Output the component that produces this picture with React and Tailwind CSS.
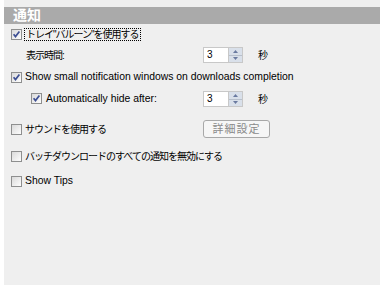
import React from 'react';

const font = { fontFamily: '"Liberation Sans", "Noto Sans CJK JP", sans-serif' };

const Check = ({ checked }) => (
  <svg width="11" height="11" viewBox="0 0 11 11" className="shrink-0">
    <defs>
      <linearGradient id="cbg" x1="0" y1="0" x2="1" y2="1">
        <stop offset="0" stopColor="#d8d8d8" />
        <stop offset="1" stopColor="#ffffff" />
      </linearGradient>
    </defs>
    <rect x="0.5" y="0.5" width="10" height="10" fill="url(#cbg)" stroke="#8e8f8f" />
    {checked && <path d="M2.6 5.2 L4.5 7.6 L8.4 2.6" fill="none" stroke="#3d4f93" strokeWidth="1.7" />}
  </svg>
);

const Spinner = ({ value }) => (
  <div className="flex h-[16px] w-[40px] border border-[#c8c8c8] bg-white">
    <div className="flex-1 pl-[3px] text-[10px] leading-[14px] text-black">{value}</div>
    <div className="flex w-[14px] flex-col border-l border-[#c8c8c8]">
      <div className="flex flex-1 items-center justify-center bg-[#d9e0ea] border-b border-[#b8c0cc]">
        <svg width="5" height="3" viewBox="0 0 5 3"><path d="M0 3 L2.5 0 L5 3Z" fill="#6a7aa0" /></svg>
      </div>
      <div className="flex flex-1 items-center justify-center bg-[#d9e0ea]">
        <svg width="5" height="3" viewBox="0 0 5 3"><path d="M0 0 L2.5 3 L5 0Z" fill="#6a7aa0" /></svg>
      </div>
    </div>
  </div>
);

const ja = 'text-[10px] tracking-[-1px] text-black';
const en = 'text-[10.4px] text-black';

export default function App() {
  return (
    <div className="flex h-[285px] w-[380px] bg-white" style={font}>
      <div className="ml-[4px] flex flex-1 flex-col bg-[#efefef] pt-[7px]">
        <div className="flex h-[17px] items-center bg-[#aaaaaa] pl-[9px] text-[14px] font-bold text-white">
          通知
        </div>

        <div className="mt-[4px] flex h-[13px] items-center pl-[7px]">
          <Check checked />
          <span className={`ml-[2px] border border-dotted border-black px-[1px] leading-[11px] ${ja}`}>
            トレイ"バルーン"を使用する
          </span>
        </div>

        <div className="mt-[6px] flex h-[16px] items-center">
          <span className={`ml-[22px] w-[177px] ${ja}`}>表示時間:</span>
          <Spinner value="3" />
          <span className={`ml-[15px] ${ja}`}>秒</span>
        </div>

        <div className="mt-[7px] flex h-[14px] items-center pl-[7px]">
          <Check checked />
          <span className={`ml-[3px] ${en}`}>Show small notification windows on downloads completion</span>
        </div>

        <div className="mt-[7px] flex h-[16px] items-center">
          <div className="ml-[27px] flex w-[172px] items-center">
            <Check checked />
            <span className={`ml-[4px] ${en}`}>Automatically hide after:</span>
          </div>
          <Spinner value="3" />
          <span className={`ml-[15px] ${ja}`}>秒</span>
        </div>

        <div className="mt-[13px] flex h-[18px] items-center">
          <div className="ml-[7px] flex w-[192px] items-center">
            <Check />
            <span className={`ml-[3px] ${ja}`}>サウンドを使用する</span>
          </div>
          <button className="flex h-[18px] w-[67px] items-center justify-center rounded-[3px] border border-[#a8a8a8] bg-[#f6f6f6] text-[11px] tracking-[1px] text-[#8a8a8a]">
            詳細設定
          </button>
        </div>

        <div className="mt-[11px] flex h-[14px] items-center pl-[7px]">
          <Check />
          <span className={`ml-[3px] ${ja}`}>バッチダウンロードのすべての通知を無効にする</span>
        </div>

        <div className="mt-[11px] flex h-[14px] items-center pl-[7px]">
          <Check />
          <span className={`ml-[3px] ${en}`}>Show Tips</span>
        </div>
      </div>
    </div>
  );
}
